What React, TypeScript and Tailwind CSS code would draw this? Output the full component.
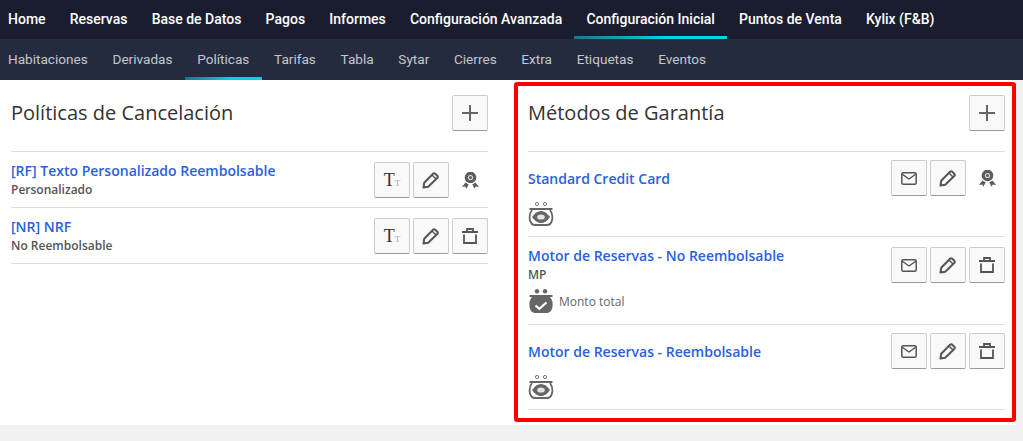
import React from 'react';

const mainNav = [
  { label: 'Home' },
  { label: 'Reservas' },
  { label: 'Base de Datos' },
  { label: 'Pagos' },
  { label: 'Informes' },
  { label: 'Configuración Avanzada' },
  { label: 'Configuración Inicial', active: true },
  { label: 'Puntos de Venta' },
  { label: 'Kylix (F&B)' },
];

const subNav = [
  { label: 'Habitaciones' },
  { label: 'Derivadas' },
  { label: 'Políticas', active: true },
  { label: 'Tarifas' },
  { label: 'Tabla' },
  { label: 'Sytar' },
  { label: 'Cierres' },
  { label: 'Extra' },
  { label: 'Etiquetas' },
  { label: 'Eventos' },
];

const PlusIcon = () => (
  <svg width="16" height="16" viewBox="0 0 16 16" fill="none" stroke="#666" strokeWidth="2">
    <path d="M8 0v16M0 8h16" />
  </svg>
);

const PencilIcon = () => (
  <svg width="18" height="18" viewBox="0 0 18 18" fill="none" stroke="#555" strokeWidth="2" strokeLinejoin="round">
    <path d="M1.500 16.500l.7-4.700L11.300 2.500a1.200 1.200 0 0 1 1.700 0l2.500 2.500a1.200 1.200 0 0 1 0 1.700L6.200 15.800z" />
    <path d="M10 4l4 4" strokeWidth="1.400" />
  </svg>
);

const TrashIcon = () => (
  <svg width="16" height="16" viewBox="0 0 16 16" fill="none" stroke="#555" strokeWidth="1.800">
    <path d="M5 3.500V1h6v2.500M0 4h16M2 6.500V15h12V6.500" />
  </svg>
);

const MailIcon = () => (
  <svg width="16" height="13" viewBox="0 0 16 13" fill="none" stroke="#555" strokeWidth="1.500" strokeLinejoin="round">
    <rect x="0.800" y="0.800" width="14.400" height="11.400" rx="1.500" />
    <path d="M1 2l7 5 7-5" />
  </svg>
);

const TextSizeIcon = () => (
  <span className="flex items-baseline font-['Liberation_Serif',serif] leading-none">
    <span className="text-[18px] text-[#333]">T</span>
    <span className="text-[9px] text-[#aaa]">T</span>
  </span>
);

const AwardIcon = () => (
  <svg width="17" height="17" viewBox="0 0 17 17" fill="#5c5c5c">
    <circle cx="8.500" cy="5.500" r="5.800" />
    <circle cx="8.500" cy="5.500" r="2.600" fill="#ddd" />
    <circle cx="8.500" cy="5.500" r="1.500" />
    <path d="M3.500 10.500l3.200 2-2.300 4.300-1.200-2.200-3.200.4zM13.500 10.500l-3.200 2 2.300 4.300 1.200-2.200 3.200.4z" />
  </svg>
);

const PurseEyeIcon = () => (
  <svg width="26" height="24" viewBox="0 0 26 24" fill="none">
    <circle cx="9" cy="2" r="1.600" stroke="#777" strokeWidth="1" />
    <circle cx="17" cy="2" r="1.600" stroke="#777" strokeWidth="1" />
    <path d="M1.500 7h23" stroke="#666" strokeWidth="2" />
    <path d="M4 8C1.800 11 1.200 14 1.800 17.500 2.300 21 4 23 7.500 23h11c3.500 0 5.200-2 5.700-5.500C24.800 14 24.200 11 22 8" stroke="#666" strokeWidth="1.800" />
    <path d="M4 15c2.700-4 5.800-6 9-6s6.300 2 9 6c-2.700 4-5.800 6-9 6s-6.300-2-9-6z" fill="#666" />
    <ellipse cx="13" cy="15" rx="3.800" ry="2.600" fill="#e4e4e4" />
  </svg>
);

const PurseCheckIcon = () => (
  <svg width="26" height="25" viewBox="0 0 26 25" fill="none">
    <circle cx="9" cy="2.200" r="2.200" fill="#666" />
    <circle cx="17" cy="2.200" r="2.200" fill="#666" />
    <path d="M1.500 7h23" stroke="#666" strokeWidth="2" />
    <path d="M4 8h18c2.500 3 3 6 2.500 9.500C24 21.500 22 24 18.500 24h-11C4 24 2 21.500 1.500 17.500 1 14 1.500 11 4 8z" fill="#666" />
    <path d="M7.500 16.500l3.800 3.300 7.200-6.300" stroke="#fff" strokeWidth="2.200" />
  </svg>
);

const ActionButton = ({ children }: { children?: React.ReactNode }) => (
  <button className="flex h-9 w-9 items-center justify-center rounded-[2px] border border-[#ccc] border-b-[#999] bg-[#f9f9f9]">
    {children}
  </button>
);

const PanelHeader = ({ title }: { title: string }) => (
  <div className="flex h-[72px] items-start justify-between border-b border-[#ddd] pt-[15px]">
    <h2 className="mt-[3px] text-[20px] leading-[30px] text-[#333]">{title}</h2>
    <ActionButton>
      <PlusIcon />
    </ActionButton>
  </div>
);

const PolicyRow = ({
  title,
  subtitle,
  last,
}: {
  title: string;
  subtitle: string;
  last?: React.ReactNode;
}) => (
  <div className="flex h-14 justify-between border-b border-[#ddd] pt-[9px]">
    <div className="leading-none">
      <a className="block text-[14px] leading-[19px] font-semibold text-[#2b5fe0]">{title}</a>
      <p className="mt-[1px] text-[12px] leading-[17px] font-semibold text-[#555]">{subtitle}</p>
    </div>
    <div className="mt-[1px] flex gap-[3px]">
      <ActionButton>
        <TextSizeIcon />
      </ActionButton>
      <ActionButton>
        <PencilIcon />
      </ActionButton>
      {last}
    </div>
  </div>
);

const MethodRow = ({
  title,
  subtitle,
  heightClass,
  icon,
  note,
  last,
}: {
  title: string;
  subtitle?: string;
  heightClass: string;
  icon: React.ReactNode;
  note?: string;
  last: React.ReactNode;
}) => (
  <div className={`flex justify-between border-b border-[#ddd] pt-[8px] ${heightClass}`}>
    <div>
      <a className={`block text-[14px] leading-[19px] font-semibold text-[#2b5fe0] ${subtitle ? 'mt-[1px]' : 'mt-[9px]'}`}>
        {title}
      </a>
      {subtitle && <p className="text-[12px] leading-[19px] font-semibold text-[#555]">{subtitle}</p>}
      <div className={`flex items-center gap-[5px] ${subtitle ? 'mt-[5px]' : 'mt-[14px]'}`}>
        {icon}
        {note && <span className="text-[12px] text-[#666]">{note}</span>}
      </div>
    </div>
    <div className={`flex items-start gap-[3px] ${subtitle ? 'mt-[2px]' : ''}`}>
      <ActionButton>
        <MailIcon />
      </ActionButton>
      <ActionButton>
        <PencilIcon />
      </ActionButton>
      {last}
    </div>
  </div>
);

const AwardSlot = () => (
  <span className="flex h-9 w-9 items-center justify-center">
    <AwardIcon />
  </span>
);

export default function App() {
  return (
    <div className="relative h-[441px] w-[1023px] overflow-hidden bg-[#f1f1f1] font-['Open_Sans',sans-serif]">
      {/* Main nav */}
      <nav className="flex h-[39px] bg-[#1a1d2e] font-['Roboto',sans-serif]">
        {mainNav.map((item) => (
          <a
            key={item.label}
            className={`flex items-center border-b-[3px] px-[12.1px] pt-[3px] text-[14px] font-medium whitespace-nowrap text-white ${
              item.active ? 'border-[#00d4e4] [border-image:linear-gradient(to_right,#25708a,#00d4e4_60%)_1]' : 'border-transparent'
            } ${item.label === 'Home' ? 'pl-[8px]' : ''}`}
          >
            {item.label}
          </a>
        ))}
      </nav>

      {/* Sub nav */}
      <nav className="flex h-[41px] bg-[#252b3f] font-['Roboto',sans-serif]">
        {subNav.map((item) => (
          <a
            key={item.label}
            className={`flex items-center border-b-[3px] px-[12.35px] pt-[3px] text-[13.6px] whitespace-nowrap text-[#c3c6cf] ${
              item.active ? 'border-[#00d4e4] [border-image:linear-gradient(to_right,#25708a,#00d4e4_60%)_1]' : 'border-transparent'
            } ${item.label === 'Habitaciones' ? 'pl-[8px]' : ''}`}
          >
            {item.label}
          </a>
        ))}
      </nav>

      {/* Panels */}
      <div className="flex h-[345px] w-[1015px] gap-[40px] bg-white pr-[10px] pl-[11px]">
        <section className="w-[477px]">
          <PanelHeader title="Políticas de Cancelación" />
          <PolicyRow title="[RF] Texto Personalizado Reembolsable" subtitle="Personalizado" last={<AwardSlot />} />
          <PolicyRow
            title="[NR] NRF"
            subtitle="No Reembolsable"
            last={
              <ActionButton>
                <TrashIcon />
              </ActionButton>
            }
          />
        </section>

        <section className="w-[477px]">
          <PanelHeader title="Métodos de Garantía" />
          <MethodRow title="Standard Credit Card" heightClass="h-[85px]" icon={<PurseEyeIcon />} last={<AwardSlot />} />
          <MethodRow
            title="Motor de Reservas - No Reembolsable"
            subtitle="MP"
            heightClass="h-[88px]"
            icon={<PurseCheckIcon />}
            note="Monto total"
            last={
              <ActionButton>
                <TrashIcon />
              </ActionButton>
            }
          />
          <MethodRow
            title="Motor de Reservas - Reembolsable"
            heightClass="h-[85px]"
            icon={<PurseEyeIcon />}
            last={
              <ActionButton>
                <TrashIcon />
              </ActionButton>
            }
          />
        </section>
      </div>

      {/* Red highlight */}
      <div className="pointer-events-none absolute top-[82px] left-[514px] h-[340px] w-[502px] rounded-[3px] border-4 border-[#ff0000]" />
    </div>
  );
}
